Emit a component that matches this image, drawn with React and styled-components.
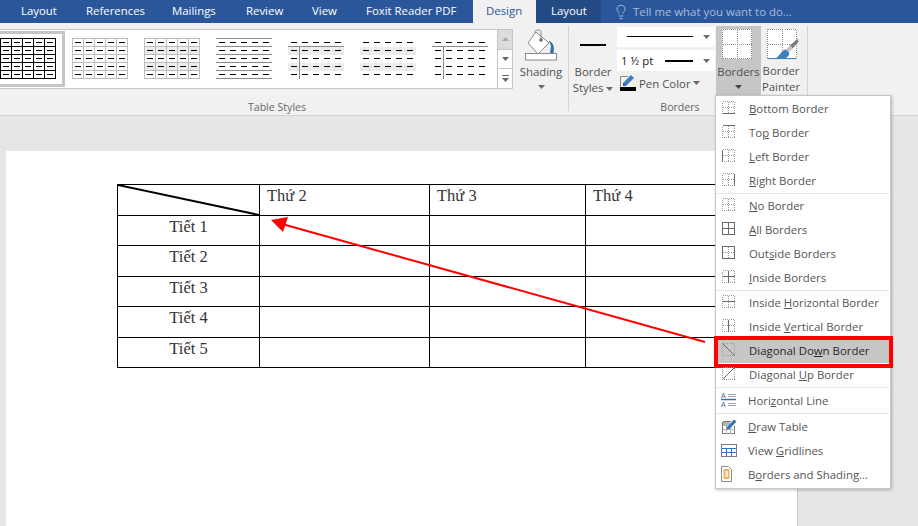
import styled, { createGlobalStyle } from "styled-components";
import { Lightbulb } from "lucide-react";

const GlobalStyle = createGlobalStyle`
  html, body { margin: 0; padding: 0; background: #e6e6e6; }
  body { font-family: "Open Sans", "Noto Sans", sans-serif; }
`;

const TABS = [
  { label: "Layout", w: 65 },
  { label: "References", w: 86 },
  { label: "Mailings", w: 74 },
  { label: "Review", w: 66 },
  { label: "View", w: 54 },
  { label: "Foxit Reader PDF", w: 107 },
];

const THUMBS = [
  { line: "#000", grid: true, heavy: true },
  { line: "#bdbdbd", grid: true },
  { line: "#bdbdbd", grid: true, band: true },
  { line: "#8c8c8c", rules: true },
  { line: "#8c8c8c", band: true, header: true },
  { band: true },
  { line: "#8c8c8c", header: true },
];

const MENU = [
  [
    { pre: "", key: "B", post: "ottom Border", icon: "bottom" },
    { pre: "To", key: "p", post: " Border", icon: "top" },
    { pre: "", key: "L", post: "eft Border", icon: "left" },
    { pre: "", key: "R", post: "ight Border", icon: "right" },
  ],
  [
    { pre: "", key: "N", post: "o Border", icon: "none" },
    { pre: "", key: "A", post: "ll Borders", icon: "all" },
    { pre: "Out", key: "s", post: "ide Borders", icon: "outside" },
    { pre: "", key: "I", post: "nside Borders", icon: "inside" },
  ],
  [
    { pre: "Inside ", key: "H", post: "orizontal Border", icon: "insideH" },
    { pre: "Inside ", key: "V", post: "ertical Border", icon: "insideV" },
    { pre: "Diagonal Do", key: "w", post: "n Border", icon: "down", active: true },
    { pre: "Diagonal ", key: "U", post: "p Border", icon: "up" },
  ],
];

const ROWS = ["Tiết 1", "Tiết 2", "Tiết 3", "Tiết 4", "Tiết 5"];

function TableThumb({ line, grid, heavy, band, rules, header }) {
  const rows = [0, 1, 2, 3, 4];
  const cols = [0, 1, 2, 3, 4];
  return (
    <svg width="56" height="41" viewBox="0 0 56 41" shapeRendering="crispEdges">
      {band && [1, 3].map((r) => <rect key={r} x="0" y={r * 8 + 1} width="56" height="8" fill="#ececec" />)}
      {rows.map((r) =>
        cols.map((c) => <rect key={`${r}${c}`} x={c * 11 + 3} y={r * 8 + 4} width="6" height="1" fill="#000" />)
      )}
      {grid &&
        [0, 1, 2, 3, 4, 5].map((i) => (
          <g key={i} stroke={line} strokeWidth={heavy ? 1.5 : 1}>
            <line x1={i * 11 + 0.5} y1="0" x2={i * 11 + 0.5} y2="41" />
            <line x1="0" y1={i * 8 + 0.5} x2="56" y2={i * 8 + 0.5} />
          </g>
        ))}
      {rules &&
        [0, 1, 2, 3, 4, 5].map((i) => (
          <line key={i} x1="0" y1={i * 8 + 0.5} x2="56" y2={i * 8 + 0.5} stroke={line} />
        ))}
      {header && (
        <g stroke={line}>
          <line x1="0" y1="8.5" x2="56" y2="8.5" />
          <line x1="11.5" y1="8" x2="11.5" y2="41" />
        </g>
      )}
    </svg>
  );
}

function BorderIcon({ type }) {
  const solid = {
    bottom: ["M0.5 12.5H12.5"],
    top: ["M0.5 0.5H12.5"],
    left: ["M0.5 0.5V12.5"],
    right: ["M12.5 0.5V12.5"],
    none: [],
    all: ["M0.5 0.5H12.5V12.5H0.5Z", "M6.5 0.5V12.5", "M0.5 6.5H12.5"],
    outside: ["M0.5 0.5H12.5V12.5H0.5Z"],
    inside: ["M6.5 0.5V12.5", "M0.5 6.5H12.5"],
    insideH: ["M0.5 6.5H12.5"],
    insideV: ["M6.5 0.5V12.5"],
    down: ["M0.5 0.5L12.5 12.5"],
    up: ["M0.5 12.5L12.5 0.5"],
  }[type];
  const diagonal = type === "down" || type === "up";
  return (
    <svg width="14" height="14" viewBox="0 0 14 14">
      <g stroke="#9a9a9a" strokeDasharray="1 1" fill="none" shapeRendering="crispEdges">
        <rect x="0.5" y="0.5" width="12" height="12" />
        {!diagonal && <path d="M6.5 0.5V12.5M0.5 6.5H12.5" />}
      </g>
      {solid.map((d) => (
        <path key={d} d={d} stroke="#6a6a6a" fill="none" shapeRendering={diagonal ? "auto" : "crispEdges"} />
      ))}
    </svg>
  );
}

function ShadingIcon() {
  return (
    <svg width="34" height="34" viewBox="0 0 34 34">
      <rect x="1.5" y="24.5" width="31" height="6.5" fill="#fff" stroke="#8a8a8a" />
      <path d="M12 3L4 14L14 25L25 14Z" fill="#fff" stroke="#8a8a8a" />
      <path d="M11 4V2.5C11 0.5 17 0.5 17 2.5V10" fill="none" stroke="#8a8a8a" />
      <circle cx="17" cy="11" r="1.8" fill="#6b6b6b" />
      <path d="M25 12C29 13 31 18 29.5 24H26L27 17Z" fill="#2f75b5" />
    </svg>
  );
}

function GridIcon({ painter }) {
  return (
    <svg width="34" height="34" viewBox="0 0 34 34">
      <rect x="0" y="0" width="30" height="30" fill="#fff" />
      <g stroke="#8a8a8a" strokeDasharray="1 1" fill="none" shapeRendering="crispEdges">
        <path d="M0.5 0.5H29.5V29.5M0.5 0.5V29.5" />
        <path d="M15.5 0.5V29.5M0.5 15.5H29.5" />
        {!painter && <path d="M0.5 29.5H29.5" />}
      </g>
      {painter && (
        <g>
          <path d="M0 30.5H30" stroke="#2f75b5" fill="none" />
          <path d="M31 10L23 17L26 20L32 13Z" fill="#7b7b7b" />
          <path d="M23 17L19 21L22 24L26 20Z" fill="#c4c4c4" />
          <path d="M19 21C14 22 13 27 9 30H19C22 28 23 26 22 24Z" fill="#3f7fbf" />
        </g>
      )}
    </svg>
  );
}

function PenIcon() {
  return (
    <svg width="18" height="12" viewBox="0 0 18 12">
      <path d="M0.5 11.5V1.5H8" fill="none" stroke="#8a8a8a" />
      <path d="M3 8L11 0L14 3L6 11H3Z" fill="#3f7fbf" />
      <path d="M3 8V11H6Z" fill="#555" />
    </svg>
  );
}

function HorizontalLineIcon() {
  return (
    <svg width="16" height="16" viewBox="0 0 16 16">
      <text x="0" y="6" fontSize="7" fontFamily="Liberation Sans, sans-serif" fill="#2f5f9f">A</text>
      <text x="0" y="15" fontSize="7" fontFamily="Liberation Sans, sans-serif" fill="#2f5f9f">A</text>
      <path d="M7 2.5H15M7 4.5H15M7 11.5H15M7 13.5H15" stroke="#a5a5a5" />
      <path d="M0 7.5H15" stroke="#2f75b5" strokeWidth="1.5" />
    </svg>
  );
}

function DrawTableIcon() {
  return (
    <svg width="16" height="16" viewBox="0 0 16 16">
      <path d="M1.5 3.5H10M1.5 3.5V15.5H13.5V8" stroke="#777" strokeWidth="1.4" fill="none" shapeRendering="crispEdges" />
      <path d="M1.5 7.5H7M5.5 7.5V15.5M9.5 10V15.5M1.5 11.5H13.5" stroke="#b0b0b0" fill="none" shapeRendering="crispEdges" />
      <rect x="2" y="4" width="7" height="3" fill="#b5b5b5" />
      <path d="M6 9L13 1.5L15.5 3.5L8.5 11L6 11.5Z" fill="#2f75b5" />
    </svg>
  );
}

function GridlinesIcon() {
  return (
    <svg width="16" height="13" viewBox="0 0 16 13">
      <rect x="0.5" y="0.5" width="15" height="12" fill="#fff" stroke="#7a7a7a" shapeRendering="crispEdges" />
      <path d="M1 4.5H15M1 8.5H15M5.5 4V12M10.5 4V12" stroke="#2f75b5" shapeRendering="crispEdges" />
    </svg>
  );
}

function ShadingBoxIcon() {
  return (
    <svg width="11" height="16" viewBox="0 0 11 16">
      <path d="M0.5 0.5H7.5L10.5 3.5V15.5H0.5Z" fill="#fff" stroke="#8a8a8a" />
      <rect x="2.5" y="3" width="6" height="10" fill="#e8b565" />
      <rect x="4.5" y="5" width="2.5" height="6" fill="#fbeed7" />
    </svg>
  );
}

function Caret({ color = "#6a6a6a" }) {
  return (
    <svg width="7" height="4" viewBox="0 0 7 4">
      <path d="M0 0H7L3.5 4Z" fill={color} />
    </svg>
  );
}

function BorderMenu() {
  return (
    <Menu>
      {MENU.map((group, g) => (
        <MenuGroup key={g}>
          {group.map((item) => (
            <MenuItem key={item.icon} $active={item.active}>
              <MenuIcon>
                <BorderIcon type={item.icon} />
              </MenuIcon>
              <span>
                {item.pre}
                <u>{item.key}</u>
                {item.post}
              </span>
            </MenuItem>
          ))}
        </MenuGroup>
      ))}
      <MenuGroup $spaced>
        <MenuItem $tight>
          <MenuIcon><HorizontalLineIcon /></MenuIcon>
          <span>Hori<u>z</u>ontal Line</span>
        </MenuItem>
      </MenuGroup>
      <MenuGroup $spaced $last>
        <MenuItem $tight>
          <MenuIcon><DrawTableIcon /></MenuIcon>
          <span><u>D</u>raw Table</span>
        </MenuItem>
        <MenuItem $tight>
          <MenuIcon><GridlinesIcon /></MenuIcon>
          <span>View <u>G</u>ridlines</span>
        </MenuItem>
        <MenuItem $tight>
          <MenuIcon><ShadingBoxIcon /></MenuIcon>
          <span>B<u>o</u>rders and Shading...</span>
        </MenuItem>
      </MenuGroup>
    </Menu>
  );
}

export default function App() {
  return (
    <Screen>
      <GlobalStyle />
      <TabBar>
        {TABS.map((tab) => (
          <Tab key={tab.label} $w={tab.w}>{tab.label}</Tab>
        ))}
        <ActiveTab>Design</ActiveTab>
        <ContextTab>Layout</ContextTab>
        <TellMe>
          <Lightbulb size={16} strokeWidth={1.4} />
          Tell me what you want to do...
        </TellMe>
      </TabBar>

      <Ribbon>
        <StylesGroup>
          <GroupBody>
            <Gallery>
              {THUMBS.map((thumb, i) => (
                <Thumb key={i} $selected={i === 0}>
                  <TableThumb {...thumb} />
                </Thumb>
              ))}
            </Gallery>
            <GalleryScroll>
              <ScrollBtn $off><svg width="7" height="4" viewBox="0 0 7 4"><path d="M0 4H7L3.5 0Z" fill="#a8a8a8" /></svg></ScrollBtn>
              <ScrollBtn><Caret /></ScrollBtn>
              <ScrollBtn $more>
                <MoreBar />
                <Caret />
              </ScrollBtn>
            </GalleryScroll>
            <ShadingButton>
              <ShadingIcon />
              <ButtonLabel>Shading</ButtonLabel>
              <CaretRow><Caret /></CaretRow>
            </ShadingButton>
          </GroupBody>
          <GroupLabel $shift={14}>Table Styles</GroupLabel>
        </StylesGroup>

        <BordersGroup>
          <GroupBody>
            <StylesButton>
              <StyleLine />
              <ButtonLabel>Border<br />Styles <Caret /></ButtonLabel>
            </StylesButton>
            <PenColumn>
              <Combo>
                <ComboLine $h={1} />
                <Caret />
              </Combo>
              <Combo $tall>
                <ComboText>1 ½ pt</ComboText>
                <ComboLine $h={2} />
                <Caret />
              </Combo>
              <PenRow>
                <PenSwatch>
                  <PenIcon />
                  <PenBar />
                </PenSwatch>
                Pen Color <Caret />
              </PenRow>
            </PenColumn>
            <BigButton $on>
              <GridIcon />
              <ButtonLabel>Borders</ButtonLabel>
              <CaretRow><Caret color="#444" /></CaretRow>
            </BigButton>
            <BigButton>
              <GridIcon painter />
              <PainterLabel>Border<br />Painter</PainterLabel>
            </BigButton>
          </GroupBody>
          <GroupLabel $shift={16}>Borders</GroupLabel>
        </BordersGroup>
      </Ribbon>

      <Canvas>
        <Sheet>
          <DocTable>
            <colgroup>
              <col width="142" />
              <col width="170" />
              <col width="156" />
              <col width="156" />
            </colgroup>
            <tbody>
              <DocRow $h={31}>
                <CornerCell>
                  <CornerLine viewBox="0 0 142 31" preserveAspectRatio="none">
                    <line x1="0" y1="0" x2="142" y2="31" stroke="#000" strokeWidth="2" />
                  </CornerLine>
                </CornerCell>
                <DocCell>Thứ 2</DocCell>
                <DocCell>Thứ 3</DocCell>
                <DocCell>Thứ 4</DocCell>
              </DocRow>
              {ROWS.map((row, i) => (
                <DocRow key={row} $h={i % 2 === 0 ? 30 : 31}>
                  <DocCell $center>{row}</DocCell>
                  <DocCell />
                  <DocCell />
                  <DocCell />
                </DocRow>
              ))}
            </tbody>
          </DocTable>
        </Sheet>
      </Canvas>

      <Arrow width="918" height="526" viewBox="0 0 918 526">
        <line x1="705" y1="342" x2="282" y2="224" stroke="#f00" strokeWidth="2" />
        <path d="M271 220L288 217L283 232Z" fill="#f00" />
      </Arrow>

      <BorderMenu />
    </Screen>
  );
}

const Screen = styled.div`
  position: relative;
  width: 918px;
  height: 526px;
  overflow: hidden;
  display: flex;
  flex-direction: column;
  font-size: 11.4px;
  color: #505050;
`;

const TabBar = styled.div`
  display: flex;
  align-items: stretch;
  height: 23px;
  padding-left: 21px;
  background: #2b579a;
  color: #fff;
  line-height: 22px;
  flex: none;
`;

const Tab = styled.div`
  width: ${(p) => p.$w}px;
  white-space: nowrap;
`;

const ActiveTab = styled.div`
  width: 63px;
  padding-left: 13px;
  box-sizing: border-box;
  background: #f1f1f1;
  color: #2b579a;
`;

const ContextTab = styled.div`
  width: 65px;
  padding-left: 15px;
  box-sizing: border-box;
  background: #234a82;
`;

const TellMe = styled.div`
  display: flex;
  align-items: center;
  gap: 4px;
  margin-left: 12px;
  color: #a9bcd9;
`;

const Ribbon = styled.div`
  display: flex;
  height: 92px;
  background: #f1f1f1;
  border-bottom: 1px solid #d4d4d4;
  flex: none;
`;

const StylesGroup = styled.div`
  width: 568px;
  display: flex;
  flex-direction: column;
  border-right: 1px solid #d4d4d4;
  margin: 3px 0 4px;
`;

const BordersGroup = styled.div`
  width: 238px;
  display: flex;
  flex-direction: column;
  border-right: 1px solid #d4d4d4;
  margin: 3px 0 4px;
`;

const GroupBody = styled.div`
  display: flex;
  flex: none;
  height: 74px;
`;

const GroupLabel = styled.div`
  flex: none;
  text-align: center;
  font-size: 10.6px;
  line-height: 14px;
  color: #666;
  padding-right: ${(p) => p.$shift}px;
`;

const Gallery = styled.div`
  width: 498px;
  height: 60px;
  margin-top: 3px;
  display: flex;
  gap: 16px;
  box-sizing: border-box;
  background: #fff;
  border: 1px solid #c6c6c6;
  border-left: 0;
  overflow: hidden;
`;

const Thumb = styled.div`
  flex: none;
  width: 56px;
  height: 41px;
  margin-top: 8px;
  position: relative;
  &::before {
    content: "";
    display: ${(p) => (p.$selected ? "block" : "none")};
    position: absolute;
    inset: -7px -9px -8px -9px;
    border: 3px solid #c6c6c6;
  }
`;

const GalleryScroll = styled.div`
  width: 14px;
  height: 58px;
  margin-top: 3px;
  display: flex;
  flex-direction: column;
  border: 1px solid #c6c6c6;
  border-left: 0;
`;

const ScrollBtn = styled.div`
  flex: 1;
  display: flex;
  flex-direction: column;
  align-items: center;
  justify-content: center;
  gap: 2px;
  background: ${(p) => (p.$off ? "#dcdcdc" : "#fff")};
  & + & {
    border-top: 1px solid #c6c6c6;
  }
`;

const MoreBar = styled.div`
  width: 7px;
  height: 1px;
  background: #6a6a6a;
`;

const ShadingButton = styled.div`
  width: 54px;
  display: flex;
  flex-direction: column;
  align-items: center;
  padding-top: 3px;
  margin-left: 1px;
`;

const ButtonLabel = styled.div`
  text-align: center;
  line-height: 16px;
  white-space: nowrap;
  margin-top: 1px;
  svg { vertical-align: middle; }
`;

const PainterLabel = styled(ButtonLabel)`
  margin-right: 5px;
`;

const CaretRow = styled.div`
  height: 14px;
  display: flex;
  align-items: center;
  justify-content: center;
`;

const StylesButton = styled.div`
  width: 48px;
  display: flex;
  flex-direction: column;
  align-items: center;
`;

const StyleLine = styled.div`
  width: 26px;
  height: 2px;
  background: #000;
  margin: 18px 0 17px;
`;

const PenColumn = styled.div`
  width: 98px;
  margin-top: 1px;
  display: flex;
  flex-direction: column;
  gap: 3px;
`;

const Combo = styled.div`
  display: flex;
  align-items: center;
  gap: 6px;
  height: ${(p) => (p.$tall ? "21px" : "20px")};
  padding: 0 5px 0 4px;
  background: #fff;
  box-sizing: border-box;
`;

const ComboText = styled.span`
  color: #222;
  white-space: nowrap;
`;

const ComboLine = styled.div`
  flex: 1;
  height: ${(p) => p.$h}px;
  margin: ${(p) => (p.$h === 1 ? "0 4px 2px 6px" : "0 4px 0 6px")};
  background: #000;
`;

const PenRow = styled.div`
  display: flex;
  align-items: center;
  gap: 2px;
  padding: 1px 0 0 3px;
  white-space: nowrap;
`;

const PenSwatch = styled.div`
  display: flex;
  flex-direction: column;
  width: 17px;
`;

const PenBar = styled.div`
  width: 16px;
  height: 4px;
  background: #000;
`;

const BigButton = styled.div`
  width: 45px;
  height: 69px;
  flex: none;
  display: flex;
  flex-direction: column;
  align-items: center;
  padding-top: 3px;
  box-sizing: border-box;
  background: ${(p) => (p.$on ? "#c6c6c6" : "transparent")};
  margin-left: ${(p) => (p.$on ? "1px" : "0")};
`;

const Canvas = styled.div`
  flex: 1;
  padding: 35px 0 0 6px;
  background: #e6e6e6;
`;

const Sheet = styled.div`
  width: 791px;
  height: 100%;
  padding: 33px 0 0 111px;
  box-sizing: border-box;
  background: #fff;
  box-shadow: 1px 0 0 #c8c8c8;
`;

const DocTable = styled.table`
  width: 624px;
  table-layout: fixed;
  border-collapse: collapse;
  font-family: "Liberation Serif", serif;
  font-size: 16.5px;
  color: #333;
`;

const DocRow = styled.tr`
  height: ${(p) => p.$h}px;
`;

const DocCell = styled.td`
  border: 1px solid #000;
  padding: 2px 7px 0;
  vertical-align: top;
  line-height: 18px;
  text-align: ${(p) => (p.$center ? "center" : "left")};
`;

const CornerCell = styled(DocCell)`
  position: relative;
  padding: 0;
`;

const CornerLine = styled.svg`
  position: absolute;
  inset: 0;
  width: 100%;
  height: 100%;
`;

const Arrow = styled.svg`
  position: absolute;
  left: 0;
  top: 0;
  pointer-events: none;
`;

const Menu = styled.div`
  position: absolute;
  left: 715px;
  top: 95px;
  width: 174px;
  padding: 1px 0;
  background: #fff;
  border: 1px solid #c6c6c6;
  box-shadow: 1px 1px 3px rgba(0, 0, 0, 0.25);
`;

const MenuGroup = styled.div`
  position: relative;
  padding-top: ${(p) => (p.$spaced ? "1px" : "0")};
  padding-bottom: ${(p) => (p.$last ? "0" : "1px")};
  &::after {
    content: "";
    display: ${(p) => (p.$last ? "none" : "block")};
    position: absolute;
    left: 1px;
    right: 1px;
    bottom: 0;
    height: 1px;
    background: #e4e4e4;
  }
`;

const MenuItem = styled.div`
  position: relative;
  display: flex;
  align-items: center;
  height: 24px;
  box-sizing: border-box;
  padding-bottom: 2px;
  padding-left: ${(p) => (p.$tight ? "5px" : "6px")};
  color: ${(p) => (p.$active ? "#262626" : "#555")};
  background: ${(p) => (p.$active ? "#c6c6c6" : "transparent")};
  white-space: nowrap;
  &::after {
    content: "";
    display: ${(p) => (p.$active ? "block" : "none")};
    position: absolute;
    inset: -3px -3px -5px -2px;
    border: 4px solid #f00;
    pointer-events: none;
  }
`;

const MenuIcon = styled.div`
  width: 27px;
  flex: none;
  display: flex;
  align-items: center;
`;
